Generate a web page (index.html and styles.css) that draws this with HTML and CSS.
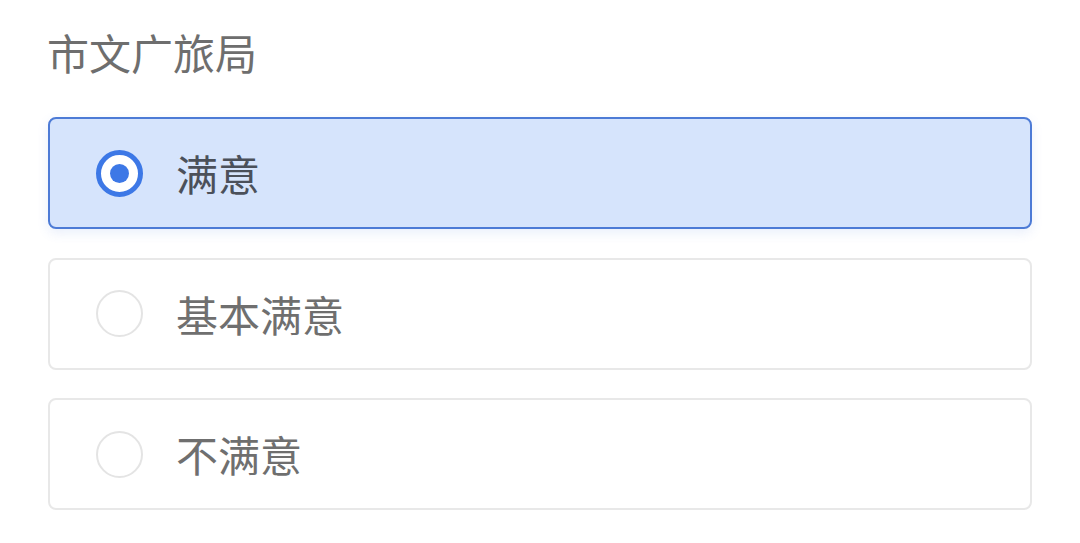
FILE: index.html
```html
<!DOCTYPE html>
<html lang="zh-CN">
<head>
    <meta charset="UTF-8">
    <meta name="viewport" content="width=device-width, initial-scale=1.0">
    <title>市文广旅局</title>
    <link rel="stylesheet" href="styles.css">
</head>
<body>

    <div class="survey">
        <div class="question-title">市文广旅局</div>

        <!-- 选项 -->
        <div class="options">
            <label class="option selected">
                <span class="radio"></span>
                <span class="option-text">满意</span>
            </label>
            <label class="option">
                <span class="radio"></span>
                <span class="option-text">基本满意</span>
            </label>
            <label class="option">
                <span class="radio"></span>
                <span class="option-text">不满意</span>
            </label>
        </div>
    </div>

</body>
</html>
```

FILE: styles.css
```css
/* 页面基础 */
body {
    font-family: "Noto Sans CJK SC", "Noto Sans", sans-serif;
    background-color: #ffffff;
    margin: 0;
}

.survey {
    padding: 27px 48px 0 47px;
}

/* 题目 */
.question-title {
    font-size: 42px;
    line-height: 50px;
    color: #6e6e6e;
    margin-bottom: 40px;
}

/* 选项列表 */
.options {
    display: flex;
    flex-direction: column;
    gap: 28.5px;
    margin-left: 1px;
}

.option {
    display: flex;
    align-items: center;
    box-sizing: border-box;
    height: 112px;
    padding-left: 46px;
    border: 2px solid #e8e8e8;
    border-radius: 8px;
    background-color: #ffffff;
    cursor: pointer;
}

.option.selected {
    border-color: #4d7bd6;
    background-color: #d6e4fc;
    box-shadow: 0 4px 12px rgba(70, 120, 220, 0.12);
}

/* 单选圆圈 */
.radio {
    box-sizing: border-box;
    width: 47px;
    height: 47px;
    border: 2px solid #e4e4e4;
    border-radius: 50%;
    background-color: #ffffff;
    display: flex;
    align-items: center;
    justify-content: center;
    flex-shrink: 0;
}

.option.selected .radio {
    border: 5px solid #3d78e6;
}

.option.selected .radio::after {
    content: "";
    width: 19px;
    height: 19px;
    border-radius: 50%;
    background-color: #3d78e6;
}

.option-text {
    margin-left: 33px;
    font-size: 42px;
    line-height: 50px;
    color: #6f6f6f;
}

.option.selected .option-text {
    color: #4b505a;
}
```
